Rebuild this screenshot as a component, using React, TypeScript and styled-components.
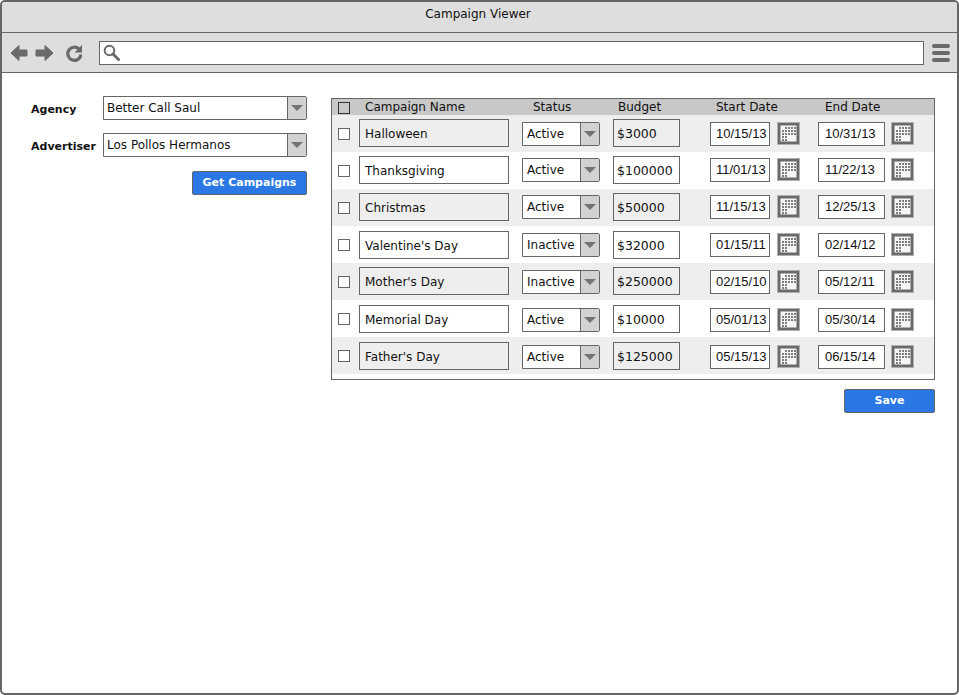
import React from 'react';
import styled, { createGlobalStyle } from 'styled-components';

const rows = [
  { name: 'Halloween', status: 'Active', budget: '$3000', start: '10/15/13', end: '10/31/13', fieldTop: 4, controlTop: 7 },
  { name: 'Thanksgiving', status: 'Active', budget: '$100000', start: '11/01/13', end: '11/22/13', fieldTop: 4, controlTop: 6 },
  { name: 'Christmas', status: 'Active', budget: '$50000', start: '11/15/13', end: '12/25/13', fieldTop: 4, controlTop: 6 },
  { name: "Valentine's Day", status: 'Inactive', budget: '$32000', start: '01/15/11', end: '02/14/12', fieldTop: 5, controlTop: 7 },
  { name: "Mother's Day", status: 'Inactive', budget: '$250000', start: '02/15/10', end: '05/12/11', fieldTop: 4, controlTop: 7 },
  { name: 'Memorial Day', status: 'Active', budget: '$10000', start: '05/01/13', end: '05/30/14', fieldTop: 5, controlTop: 8 },
  { name: "Father's Day", status: 'Active', budget: '$125000', start: '05/15/13', end: '06/15/14', fieldTop: 5, controlTop: 8 },
];

const CalendarIcon = ({ top }: { top: number }) => {
  const cells: React.ReactElement[] = [];
  for (let r = 0; r < 5; r++) {
    for (let c = 0; c < 5; c++) {
      if (r === 0 && c === 0) continue;
      if (r >= 3 && c >= 2) continue;
      cells.push(<rect key={`${r}-${c}`} x={5 + c * 3} y={5 + r * 3} width="2" height="2" fill="#7e7e7e" />);
    }
  }
  return (
    <CalendarSvg $top={top} width="23" height="23" viewBox="0 0 23 23">
      <rect x="0" y="0" width="23" height="23" fill="#b0b0b0" />
      <rect x="1" y="1" width="21" height="21" fill="#6a6a6a" />
      <rect x="3.5" y="3.5" width="16" height="16" fill="#f6f6f6" />
      {cells}
    </CalendarSvg>
  );
};

const Caret = () => (
  <svg width="12" height="6" viewBox="0 0 12 6">
    <path d="M0 0H12L6 6Z" fill="#737373" />
  </svg>
);

const Select = ({ value, wide, top = 0 }: { value: string; wide?: boolean; top?: number }) => (
  <SelectBox $wide={wide} $top={top}>
    <SelectText $wide={wide}>{value}</SelectText>
    <SelectButton><Caret /></SelectButton>
  </SelectBox>
);

const App = () => (
  <>
    <GlobalStyle />
    <Page>
      <TitleBar>Campaign Viewer</TitleBar>
      <Toolbar>
        <svg width="72" height="18" viewBox="0 0 72 18">
          <path d="M9 1.5 L1 9 L9 16.5 V12 H17 V6 H9Z" fill="#6a6a6a" stroke="#6a6a6a" strokeLinejoin="round" />
          <path d="M35 1.5 L43 9 L35 16.5 V12 H26 V6 H35Z" fill="#6a6a6a" stroke="#6a6a6a" strokeLinejoin="round" />
          <path d="M69 5 A6.6 6.6 0 1 0 71 10.5" fill="none" stroke="#6a6a6a" strokeWidth="3.2" />
          <path d="M72 1 V8.5 H64.5Z" fill="#6a6a6a" />
        </svg>
        <AddressBar>
          <svg width="17" height="17" viewBox="0 0 17 17">
            <circle cx="6.5" cy="6.5" r="4.8" fill="none" stroke="#6a6a6a" strokeWidth="2" />
            <path d="M10 10 L15.5 15.5" stroke="#6a6a6a" strokeWidth="3" strokeLinecap="round" />
          </svg>
        </AddressBar>
        <Menu>
          <MenuBar />
          <MenuBar />
          <MenuBar />
        </Menu>
      </Toolbar>
      <Content>
        <Filters>
          <FilterRow>
            <FilterLabel>Agency</FilterLabel>
            <Select value="Better Call Saul" wide />
          </FilterRow>
          <FilterRow>
            <FilterLabel>Advertiser</FilterLabel>
            <Select value="Los Pollos Hermanos" wide />
          </FilterRow>
          <ButtonRow $top={14}>
            <BlueButton $width={115}>Get Campaigns</BlueButton>
          </ButtonRow>
        </Filters>
        <Main>
          <Table>
            <HeaderRow>
              <HeaderCheck />
              <HeadCell>Campaign Name</HeadCell>
              <HeadCell>Status</HeadCell>
              <HeadCell>Budget</HeadCell>
              <HeadCell>Start Date</HeadCell>
              <HeadCell>End Date</HeadCell>
            </HeaderRow>
            {rows.map((row, i) => (
              <Row key={row.name} $shaded={i % 2 === 0}>
                <Check />
                <NameField $shaded={i % 2 === 0} $top={row.fieldTop}>{row.name}</NameField>
                <Select value={row.status} top={row.controlTop} />
                <BudgetField $shaded={i % 2 === 0} $top={row.fieldTop}>{row.budget}</BudgetField>
                <DateBox $top={row.controlTop} $width={60}>{row.start}</DateBox>
                <CalendarIcon top={row.controlTop} />
                <EndDateBox $top={row.controlTop} $width={67}>{row.end}</EndDateBox>
                <CalendarIcon top={row.controlTop} />
              </Row>
            ))}
          </Table>
          <ButtonRow>
            <BlueButton $width={91}>Save</BlueButton>
          </ButtonRow>
        </Main>
      </Content>
    </Page>
  </>
);

const GlobalStyle = createGlobalStyle`
  html, body { margin: 0; padding: 0; background: #fff; overflow: hidden; }
  * { box-sizing: border-box; }
  body { font-family: "DejaVu Sans", sans-serif; font-size: 12px; color: #111; }
`;

const Page = styled.div`
  width: 959px;
  height: 695px;
  border: 2px solid #666;
  border-radius: 5px;
  overflow: hidden;
  background: #fff;
`;

const TitleBar = styled.div`
  height: 31px;
  background: #dedede;
  border-bottom: 1px solid #666;
  text-align: center;
  line-height: 25px;
  padding-right: 3px;
`;

const Toolbar = styled.div`
  height: 40px;
  background: #dedede;
  border-bottom: 1px solid #666;
  display: flex;
  align-items: center;
  padding: 0 6px 0 8px;

  > svg:first-child {
    margin-right: 17px;
    flex: none;
  }
`;

const AddressBar = styled.div`
  width: 825px;
  height: 24px;
  background: #fff;
  border: 1px solid #666;
  display: flex;
  align-items: center;
  padding-left: 3px;
`;

const Menu = styled.div`
  margin-left: 8px;
  display: flex;
  flex-direction: column;
  gap: 3px;
`;

const MenuBar = styled.div`
  width: 18px;
  height: 4px;
  border-radius: 2px;
  background: #6a6a6a;
`;

const Content = styled.div`
  display: flex;
  padding: 23px 22px 0 29px;
`;

const Filters = styled.div`
  width: 276px;
  margin-right: 24px;
`;

const FilterRow = styled.div`
  display: flex;
  align-items: center;
  height: 24px;
  margin-bottom: 13px;
`;

const FilterLabel = styled.div`
  width: 72px;
  font-weight: bold;
  font-size: 11px;
  padding-top: 3px;
`;

const SelectBox = styled.div<{ $wide?: boolean; $top: number }>`
  width: ${(p) => (p.$wide ? '204px' : '78px')};
  height: 24px;
  margin: ${(p) => p.$top}px 0 0;
  display: flex;
  flex: none;
  background: #fff;
  border: 1px solid #666;
  border-radius: 0 2px 2px 0;
`;

const SelectText = styled.div<{ $wide?: boolean }>`
  flex: 1;
  padding-left: ${(p) => (p.$wide ? '3px' : '4px')};
  line-height: 22px;
  white-space: nowrap;
  overflow: hidden;
`;

const SelectButton = styled.div`
  width: 19px;
  flex: none;
  background: #d2d2d2;
  border-left: 1px solid #666;
  display: flex;
  align-items: center;
  justify-content: center;
`;

const ButtonRow = styled.div<{ $top?: number }>`
  display: flex;
  justify-content: flex-end;
  margin-top: ${(p) => p.$top ?? 0}px;
`;

const BlueButton = styled.div<{ $width: number }>`
  width: ${(p) => p.$width}px;
  height: 24px;
  background: #2b78e4;
  border: 1px solid #666;
  border-radius: 2px;
  color: #fff;
  font-weight: bold;
  font-size: 11px;
  text-align: center;
  line-height: 22px;
`;

const Main = styled.div`
  width: 604px;
`;

const Table = styled.div`
  margin-top: 2px;
  height: 282px;
  border: 1px solid #666;
  margin-bottom: 9px;
`;

const HeaderRow = styled.div`
  height: 16px;
  background: #c8c8c8;
  display: grid;
  grid-template-columns: 27px 168px 85px 98px 109px 1fr;
  align-items: center;
  padding-left: 6px;
`;

const HeaderCheck = styled.div`
  width: 12px;
  height: 12px;
  border: 1px solid #333;
`;

const HeadCell = styled.div`
  line-height: 17px;
  white-space: nowrap;
`;

const Row = styled.div<{ $shaded: boolean }>`
  height: 37px;
  background: ${(p) => (p.$shaded ? '#eeeeee' : '#fff')};
  display: flex;
  align-items: flex-start;
  padding-left: 6px;
`;

const Check = styled.div`
  width: 12px;
  height: 12px;
  flex: none;
  margin: 13px 9px 0 0;
  border: 1px solid #666;
  background: #fff;
`;

const NameField = styled.div<{ $shaded: boolean; $top: number }>`
  width: 150px;
  height: 28px;
  flex: none;
  margin: ${(p) => p.$top}px 13px 0 0;
  border: 1px solid #666;
  background: ${(p) => (p.$shaded ? '#eeeeee' : '#fff')};
  padding-left: 5px;
  line-height: 29px;
  white-space: nowrap;
  overflow: hidden;
`;

const BudgetField = styled(NameField)`
  width: 67px;
  margin-left: 13px;
  margin-right: 30px;
  padding-left: 3px;
  font-size: 12.5px;
  line-height: 28px;
`;

const DateBox = styled.div<{ $top: number; $width: number }>`
  width: ${(p) => p.$width}px;
  height: 24px;
  flex: none;
  margin: ${(p) => p.$top}px 7px 0 0;
  border: 1px solid #666;
  background: #fff;
  padding-left: 5px;
  font-family: "Liberation Sans", Arial, sans-serif;
  font-size: 13px;
  line-height: 21px;
  white-space: nowrap;
  overflow: hidden;
`;

const EndDateBox = styled(DateBox)`
  margin-left: 18px;
  margin-right: 6px;
  padding-left: 6px;
`;

const CalendarSvg = styled.svg<{ $top: number }>`
  flex: none;
  margin-top: ${(p) => p.$top}px;
`;

export default App;
